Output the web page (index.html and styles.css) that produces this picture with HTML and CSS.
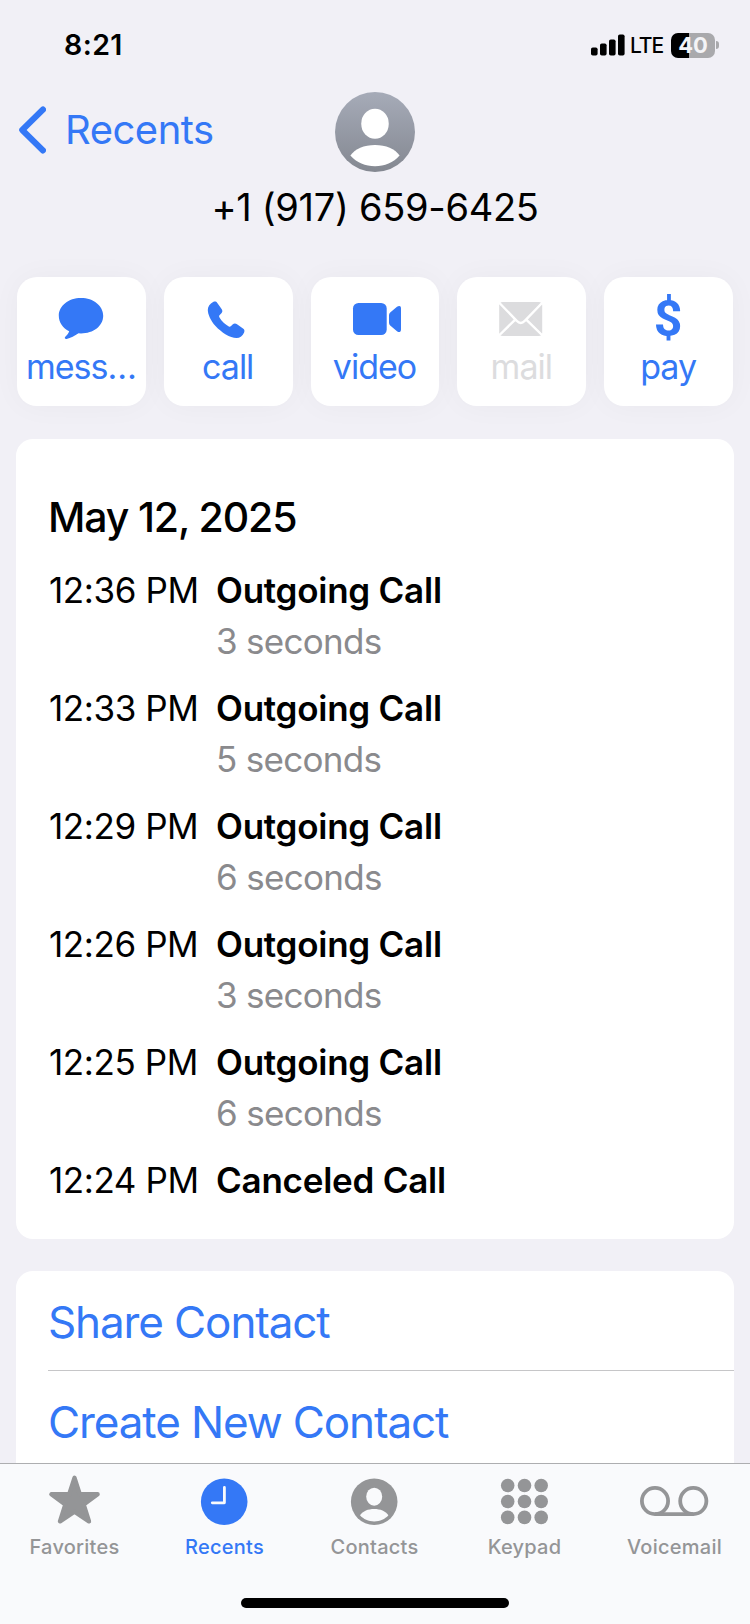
FILE: index.html
```html
<!DOCTYPE html>
<html lang="en">
<head>
  <meta charset="UTF-8">
  <meta name="viewport" content="width=device-width, initial-scale=1.0">
  <title>Recents</title>
  <link rel="stylesheet" href="styles.css">
</head>
<body>
  <div class="screen">
    <main class="content">
      <div class="status-bar">
        <span class="time">8:21</span>
        <div class="status-icons">
          <svg class="signal" width="36" height="24" viewBox="0 0 36 24">
            <rect x="1" y="14.5" width="6.6" height="8" rx="1.8"/>
            <rect x="10" y="10.5" width="6.6" height="12" rx="1.8"/>
            <rect x="19" y="6.5" width="6.6" height="16" rx="1.8"/>
            <rect x="28" y="1.5" width="6.6" height="21" rx="1.8"/>
          </svg>
          <span class="network">LTE</span>
          <span class="battery">40</span>
          <span class="battery-cap"></span>
        </div>
      </div>

      <header class="header">
        <a class="back" href="#">
          <svg width="28" height="48" viewBox="0 0 28 48">
            <path d="M25 3.5 L4.2 24 L25 44.5" fill="none" stroke="currentColor" stroke-width="6" stroke-linecap="round" stroke-linejoin="round"/>
          </svg>
          <span>Recents</span>
        </a>
        <svg class="avatar" width="80" height="80" viewBox="0 0 80 80">
          <defs>
            <linearGradient id="avatarBg" x1="0" y1="0" x2="0" y2="1">
              <stop offset="0" stop-color="#a6abb8"/>
              <stop offset="1" stop-color="#848891"/>
            </linearGradient>
          </defs>
          <circle cx="40" cy="40" r="40" fill="url(#avatarBg)"/>
          <rect x="26.3" y="16.7" width="27.4" height="30" rx="13.7" ry="14.5" fill="#fff"/>
          <path d="M15.4 63.5 C20 57 29 53 40 53 S60 57 64.6 63.5 C58.5 70.5 49.5 74.3 40 74.3 S21.5 70.5 15.4 63.5Z" fill="#fff"/>
        </svg>
      </header>
      <h1 class="number">+1 (917) 659-6425</h1>

      <div class="actions">
        <button class="action">
          <svg width="60" height="56" viewBox="0 0 60 56">
            <path d="M30 8 C42.5 8 52.2 15.8 52.2 25.7 C52.2 35.8 42.5 43.4 30 43.4 L27.5 43.3 C24 45.6 19.5 48.2 15.6 49 C14 49.2 13.2 48 14.3 46.8 C16 45 17.5 43.3 18.2 41.2 C11.8 38 7.8 32.4 7.8 25.7 C7.8 15.8 17.5 8 30 8Z"/>
          </svg>
          <span>mess…</span>
        </button>
        <button class="action">
          <svg width="60" height="56" viewBox="0 0 60 56">
            <path d="M15.1 12 C17 11.2 18.3 11.5 19.3 13 L23.6 19 C24.7 20.6 24.6 22 23.4 23.3 L21.5 25.3 C20.9 26 21 26.7 21.5 27.5 C23.5 31 27.5 34.8 30.8 36.5 C31.6 36.9 32.2 36.7 32.8 36.2 L34.6 34.5 C35.9 33.3 37.6 33.2 39 34.2 L45 38.4 C46.5 39.5 46.8 40.8 46.1 42.4 C44.8 45.9 42 48 38.5 48 C32 48 23.5 42.5 17.5 36 C12.5 30.5 9.8 24 9.8 20 C9.8 16.5 12 13.5 15.1 12Z"/>
          </svg>
          <span>call</span>
        </button>
        <button class="action">
          <svg width="60" height="56" viewBox="0 0 60 56">
            <rect x="8" y="13" width="33.7" height="32" rx="5.5"/>
            <path d="M44 25.2 Q44 23.6 45.2 22.6 L52 16.8 Q54 15.4 55.2 16.3 Q56 16.9 56 18.5 V39.5 Q56 41.1 55.2 41.7 Q54 42.6 52 41.2 L45.2 35.4 Q44 34.4 44 32.8Z"/>
          </svg>
          <span>video</span>
        </button>
        <button class="action disabled">
          <svg width="60" height="56" viewBox="0 0 60 56">
            <rect x="7.2" y="12" width="43" height="34" rx="3.5"/>
            <path class="fold" d="M6.5 12 L24.7 30.8 C27.3 33.7 30.2 33.7 32.8 30.8 L51 12"/>
            <path class="fold" d="M6.5 46 L23.5 29.3 M51 46 L34 29.3"/>
          </svg>
          <span>mail</span>
        </button>
        <button class="action">
          <span class="dollar">$</span>
          <span>pay</span>
        </button>
      </div>

      <section class="card history">
        <h2 class="date">May 12, 2025</h2>
        <ul class="calls">
          <li class="call">
            <span class="call-time">12:36 PM</span>
            <div><strong>Outgoing Call</strong><span class="duration">3 seconds</span></div>
          </li>
          <li class="call">
            <span class="call-time">12:33 PM</span>
            <div><strong>Outgoing Call</strong><span class="duration">5 seconds</span></div>
          </li>
          <li class="call">
            <span class="call-time">12:29 PM</span>
            <div><strong>Outgoing Call</strong><span class="duration">6 seconds</span></div>
          </li>
          <li class="call">
            <span class="call-time">12:26 PM</span>
            <div><strong>Outgoing Call</strong><span class="duration">3 seconds</span></div>
          </li>
          <li class="call">
            <span class="call-time">12:25 PM</span>
            <div><strong>Outgoing Call</strong><span class="duration">6 seconds</span></div>
          </li>
          <li class="call">
            <span class="call-time">12:24 PM</span>
            <div><strong>Canceled Call</strong></div>
          </li>
        </ul>
      </section>

      <section class="card links">
        <a href="#">Share Contact</a>
        <a href="#">Create New Contact</a>
      </section>
    </main>

    <nav class="tab-bar">
      <div class="tabs">
        <a class="tab" href="#">
          <svg width="80" height="56" viewBox="0 0 80 56">
            <path d="M39.5 5.8 L44.8 22.3 L62.6 22.3 L48.7 32.6 L54 49.3 L39.5 39.6 L25 49.3 L30.3 32.6 L16.4 22.3 L34.2 22.3Z" stroke="currentColor" stroke-width="4.4" stroke-linejoin="round"/>
          </svg>
          <span>Favorites</span>
        </a>
        <a class="tab active" href="#">
          <svg width="80" height="56" viewBox="0 0 80 56">
            <circle cx="39.2" cy="29.7" r="23.3"/>
            <path d="M39.4 15.4 V30.8 H27.3" fill="none" stroke="#f9fafc" stroke-width="2.8" stroke-linecap="round" stroke-linejoin="round"/>
          </svg>
          <span>Recents</span>
        </a>
        <a class="tab" href="#">
          <svg width="80" height="56" viewBox="0 0 80 56">
            <circle cx="39.2" cy="29.7" r="23.3"/>
            <ellipse cx="39.2" cy="24.7" rx="8" ry="9" fill="#f9fafc"/>
            <path d="M25 43.3 C28 39 33 37 39.2 37 S50.4 39 53.4 43.3 C50 47.2 45 49.4 39.2 49.4 S28.4 47.2 25 43.3Z" fill="#f9fafc"/>
          </svg>
          <span>Contacts</span>
        </a>
        <a class="tab" href="#">
          <svg width="80" height="56" viewBox="0 0 80 56">
            <circle cx="22.7" cy="13.5" r="6.8"/><circle cx="39.5" cy="13.5" r="6.8"/><circle cx="56.2" cy="13.5" r="6.8"/>
            <circle cx="22.7" cy="29.5" r="6.8"/><circle cx="39.5" cy="29.5" r="6.8"/><circle cx="56.2" cy="29.5" r="6.8"/>
            <circle cx="22.7" cy="45.4" r="6.8"/><circle cx="39.5" cy="45.4" r="6.8"/><circle cx="56.2" cy="45.4" r="6.8"/>
          </svg>
          <span>Keypad</span>
        </a>
        <a class="tab" href="#">
          <svg width="80" height="56" viewBox="0 0 80 56">
            <g fill="none" stroke="currentColor" stroke-width="3.8">
              <circle cx="20" cy="29" r="13.1"/>
              <circle cx="58.3" cy="29" r="13.1"/>
              <path d="M20 42.1 H58.3"/>
            </g>
          </svg>
          <span>Voicemail</span>
        </a>
      </div>
      <div class="home-indicator"></div>
    </nav>
  </div>
</body>
</html>
```
FILE: styles.css
```css
:root {
  --bg-color: #f1f0f6;
  --blue: #3478f6;
  --gray: #8a8a8d;
  --tab-gray: #949597;
  --tab-bg: #f9fafc;
}

* {
  margin: 0;
  padding: 0;
  box-sizing: border-box;
}

body {
  font-family: Inter, "Liberation Sans", sans-serif;
  background-color: var(--bg-color);
  color: #000;
}

a {
  color: var(--blue);
  text-decoration: none;
}

svg {
  display: block;
  flex-shrink: 0;
  fill: currentColor;
}

.screen {
  width: 750px;
  height: 1624px;
  display: flex;
  flex-direction: column;
  overflow: hidden;
}

.content {
  flex: 1;
  min-height: 0;
  overflow: hidden;
}

/* Status bar */
.status-bar {
  height: 90px;
  padding: 0 31px 0 64px;
  display: flex;
  align-items: center;
  justify-content: space-between;
}

.time {
  font-size: 28.5px;
  font-weight: 600;
  line-height: 34px;
  letter-spacing: 0.4px;
}

.status-icons {
  display: flex;
  align-items: center;
}

.network {
  margin: 1px 8px 0 4px;
  font-size: 21px;
  font-weight: 500;
  letter-spacing: -1.1px;
}

.battery {
  width: 44px;
  height: 25px;
  border-radius: 7px;
  background: linear-gradient(to right, #000 40%, #a9a9ac 40%);
  color: #f4f4f7;
  font-size: 22px;
  font-weight: 700;
  line-height: 25px;
  text-align: center;
}

.battery-cap {
  width: 3px;
  height: 8px;
  margin-left: 1px;
  border-radius: 0 3px 3px 0;
  background: #a9a9ac;
}

/* Contact header */
.header {
  height: 82px;
  padding: 2px 18px 0;
  display: grid;
  grid-template-columns: 1fr 80px 1fr;
  align-items: center;
}

.back {
  display: flex;
  align-items: center;
  gap: 19px;
  margin-bottom: 5px;
  font-size: 40px;
  line-height: 48px;
  letter-spacing: -0.5px;
}

.number {
  margin-top: 12px;
  font-size: 38px;
  font-weight: 400;
  line-height: 46px;
  letter-spacing: -0.3px;
  text-align: center;
}

.actions {
  display: grid;
  grid-template-columns: repeat(5, 1fr);
  gap: 18px;
  margin: 47px 17px 33px;
}

.action {
  height: 129px;
  padding-top: 13px;
  display: flex;
  flex-direction: column;
  align-items: center;
  gap: 1px;
  border: none;
  border-radius: 20px;
  background: #fff;
  box-shadow: 0 0 30px rgba(0, 0, 0, 0.035);
  color: var(--blue);
  font-family: inherit;
  font-size: 34px;
  line-height: 40px;
  letter-spacing: -1px;
}

.action span {
  padding-right: 1px;
}

.action.disabled {
  color: #dcdcde;
}

.fold {
  fill: none;
  stroke: #fff;
  stroke-width: 2.4;
}

.action .dollar {
  height: 56px;
  font-family: Roboto, sans-serif;
  font-size: 50px;
  font-weight: 700;
  line-height: 59px;
  letter-spacing: 0;
}

/* Cards */
.card {
  margin: 0 16px 32px;
  border-radius: 17px;
  background: #fff;
}

.history {
  padding: 53px 32px 33px;
}

.date {
  margin-bottom: 23px;
  font-size: 41px;
  font-weight: 450;
  line-height: 50px;
  letter-spacing: -1.15px;
}

.calls {
  display: flex;
  flex-direction: column;
  gap: 16px;
  list-style: none;
}

.call {
  display: grid;
  grid-template-columns: 168px 1fr;
  font-size: 35px;
  line-height: 51px;
}

.call-time {
  padding-left: 1px;
  letter-spacing: -0.4px;
}

.call strong,
.duration {
  display: block;
}

.call strong {
  font-weight: 600;
  letter-spacing: -0.25px;
}

.duration {
  color: var(--gray);
  letter-spacing: -0.7px;
}

.links {
  padding: 0 0 30px 32px;
}

.links a {
  display: flex;
  align-items: center;
  height: 100px;
  padding-top: 3px;
  border-bottom: 1px solid #c6c6c8;
  font-size: 44px;
  letter-spacing: -1.12px;
}

/* Tab bar */
.tab-bar {
  height: 161px;
  padding-top: 8px;
  border-top: 1px solid #adaeb0;
  background: var(--tab-bg);
}

.tabs {
  display: grid;
  grid-template-columns: repeat(5, 1fr);
}

.tab {
  display: flex;
  flex-direction: column;
  align-items: center;
  gap: 7px;
  color: var(--tab-gray);
  font-size: 20px;
  font-weight: 500;
  line-height: 24px;
  letter-spacing: 0.25px;
}

.tab span {
  padding-right: 1px;
}

.tab.active {
  color: var(--blue);
}

.home-indicator {
  width: 268px;
  height: 10px;
  margin: 39px auto 0;
  border-radius: 5px;
  background: #000;
}
```
